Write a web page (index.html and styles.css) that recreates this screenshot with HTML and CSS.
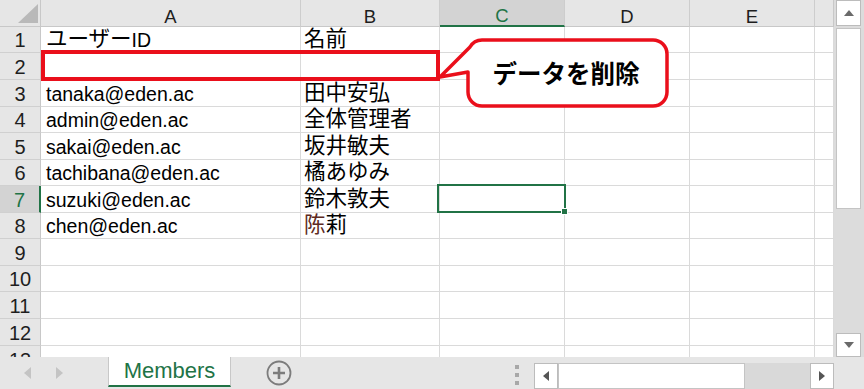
FILE: index.html
```html
<!DOCTYPE html>
<html lang="ja">
<head>
<meta charset="utf-8">
<title>Members</title>
<link rel="stylesheet" href="styles.css">
</head>
<body>
<div class="app">
  <div class="main">
    <div class="sheet">
      <div class="grid">
        <div class="corner"><div class="tri"></div></div>
        <div class="ch">A</div>
        <div class="ch">B</div>
        <div class="ch sel">C</div>
        <div class="ch">D</div>
        <div class="ch">E</div>
        <div class="ch last"></div>

        <div class="rh">1</div>
        <div class="c"><span class="jp">ユーザー</span>ID</div>
        <div class="c b"><span class="jp">名前</span></div>
        <div class="c"></div><div class="c"></div><div class="c"></div><div class="c"></div>

        <div class="rh">2</div>
        <div class="c"></div><div class="c b"></div>
        <div class="c"></div><div class="c"></div><div class="c"></div><div class="c"></div>

        <div class="rh">3</div>
        <div class="c">tanaka@eden.ac</div>
        <div class="c b"><span class="jp">田中安弘</span></div>
        <div class="c"></div><div class="c"></div><div class="c"></div><div class="c"></div>

        <div class="rh">4</div>
        <div class="c">admin@eden.ac</div>
        <div class="c b"><span class="jp">全体管理者</span></div>
        <div class="c"></div><div class="c"></div><div class="c"></div><div class="c"></div>

        <div class="rh">5</div>
        <div class="c">sakai@eden.ac</div>
        <div class="c b"><span class="jp">坂井敏夫</span></div>
        <div class="c"></div><div class="c"></div><div class="c"></div><div class="c"></div>

        <div class="rh">6</div>
        <div class="c">tachibana@eden.ac</div>
        <div class="c b"><span class="jp">橘あゆみ</span></div>
        <div class="c"></div><div class="c"></div><div class="c"></div><div class="c"></div>

        <div class="rh sel">7</div>
        <div class="c">suzuki@eden.ac</div>
        <div class="c b"><span class="jp">鈴木敦夫</span></div>
        <div class="c"></div><div class="c"></div><div class="c"></div><div class="c"></div>

        <div class="rh">8</div>
        <div class="c">chen@eden.ac</div>
        <div class="c b"><span class="jp"><span class="odd">陈</span>莉</span></div>
        <div class="c"></div><div class="c"></div><div class="c"></div><div class="c"></div>

        <div class="rh">9</div>
        <div class="c"></div><div class="c"></div><div class="c"></div><div class="c"></div><div class="c"></div><div class="c"></div>
        <div class="rh">10</div>
        <div class="c"></div><div class="c"></div><div class="c"></div><div class="c"></div><div class="c"></div><div class="c"></div>
        <div class="rh">11</div>
        <div class="c"></div><div class="c"></div><div class="c"></div><div class="c"></div><div class="c"></div><div class="c"></div>
        <div class="rh">12</div>
        <div class="c"></div><div class="c"></div><div class="c"></div><div class="c"></div><div class="c"></div><div class="c"></div>
        <div class="rh">13</div>
        <div class="c"></div><div class="c"></div><div class="c"></div><div class="c"></div><div class="c"></div><div class="c"></div>
      </div>

      <div class="redbox"></div>

      <div class="callout">
        <svg class="bubble" width="242" height="76" viewBox="0 0 242 76">
          <path d="M52 4 H223 A14 14 0 0 1 237 18 V56 A14 14 0 0 1 223 70 H52 A14 14 0 0 1 38 56 V36 L10 41 L40 11 A14 14 0 0 1 52 4 Z" fill="#fff" stroke="#ea0f1b" stroke-width="3.5" stroke-linejoin="round"/>
        </svg>
        <span class="ctext">データを削除</span>
      </div>

      <div class="selbox"><span class="handle"></span></div>
    </div>

    <div class="vscroll">
      <div class="vbtn"><svg width="10" height="6" viewBox="0 0 10 6"><polygon points="0,6 10,6 5,0" fill="#6a6a6a"/></svg></div>
      <div class="vthumb"></div>
      <div class="vtrack"></div>
      <div class="vbtn down"><svg width="10" height="6" viewBox="0 0 10 6"><polygon points="0,0 10,0 5,6" fill="#6a6a6a"/></svg></div>
    </div>
  </div>

  <div class="tabbar">
    <div class="nav">
      <svg width="7" height="12" viewBox="0 0 7 12"><polygon points="7,0 7,12 0,6" fill="#c4c4c4"/></svg>
      <svg width="7" height="12" viewBox="0 0 7 12"><polygon points="0,0 0,12 7,6" fill="#c4c4c4"/></svg>
    </div>
    <div class="tab">Members</div>
    <div class="add">
      <svg width="26" height="26" viewBox="0 0 26 26">
        <circle cx="13" cy="13" r="11.5" fill="none" stroke="#7c7c7c" stroke-width="1.8"/>
        <path d="M13 7 V19 M7 13 H19" stroke="#7c7c7c" stroke-width="2.6"/>
      </svg>
    </div>
    <div class="spacer"></div>
    <div class="dots"><i></i><i></i><i></i></div>
    <div class="hscroll">
      <div class="hbtn"><svg width="6" height="10" viewBox="0 0 6 10"><polygon points="6,0 6,10 0,5" fill="#555"/></svg></div>
      <div class="hthumb"></div>
      <div class="htrack"></div>
      <div class="hbtn"><svg width="6" height="10" viewBox="0 0 6 10"><polygon points="0,0 0,10 6,5" fill="#555"/></svg></div>
    </div>
  </div>
</div>
</body>
</html>
```

FILE: styles.css
```css
* { box-sizing: border-box; }
html, body { margin: 0; padding: 0; }
body {
  width: 864px;
  height: 389px;
  overflow: hidden;
  background: #fff;
  font-family: "Liberation Sans", "Noto Sans CJK JP", sans-serif;
}
.app { display: flex; flex-direction: column; width: 864px; height: 389px; }
.main { display: flex; height: 357px; }
.sheet { position: relative; width: 834px; height: 357px; overflow: hidden; }

.grid {
  display: grid;
  grid-template-columns: 41px 260px 139px 125px 125px 125px 19px;
  grid-template-rows: 27px 26px 27px 27px 26px 27px 26px 27px 26px 27px 26px 27px 27px 27px;
}
.corner {
  background: #e6e6e6;
  border-right: 1px solid #c8c8c8;
  border-bottom: 1px solid #c8c8c8;
  display: flex;
  justify-content: flex-end;
  align-items: flex-end;
  padding: 0 2px 3px 0;
}
.tri {
  width: 0;
  height: 0;
  border-left: 20px solid transparent;
  border-bottom: 19px solid #b9b9b9;
}
.ch {
  background: #e6e6e6;
  border-right: 1px solid #cdcdcd;
  border-bottom: 1px solid #c8c8c8;
  display: flex;
  justify-content: center;
  align-items: flex-end;
  font-size: 18.5px;
  line-height: 19px;
  color: #1e1e1e;
}
.ch.sel {
  background: #d3d3d3;
  border-bottom: 2px solid #217346;
  color: #217346;
  line-height: 18px;
}
.ch.last { border-right: 1px solid #c8c8c8; }
.rh {
  background: #e6e6e6;
  border-right: 1px solid #c8c8c8;
  border-bottom: 1px solid #d0d0d0;
  display: flex;
  justify-content: center;
  align-items: flex-end;
  padding-bottom: 1px;
  font-size: 20px;
  line-height: 22px;
  color: #1e1e1e;
}
.rh.sel {
  background: #d3d3d3;
  border-right: 2px solid #217346;
  color: #217346;
}
.c {
  border-right: 1px solid #dadada;
  border-bottom: 1px solid #dadada;
  display: flex;
  align-items: flex-end;
  padding: 0 0 1px 5px;
  font-size: 19.5px;
  line-height: 22px;
  white-space: nowrap;
  color: #000;
}
.c.b { padding-left: 3px; }
.jp {
  font-family: "Noto Sans CJK JP", sans-serif;
  font-size: 21.5px;
  margin-bottom: 3px;
}
.odd { color: #5e2a22; }

.redbox {
  position: absolute;
  left: 41px;
  top: 50px;
  width: 399px;
  height: 31px;
  border: 4px solid #ea0f1b;
}
.callout {
  position: absolute;
  left: 468px;
  top: 40px;
  width: 199px;
  height: 66px;
  display: flex;
  align-items: center;
  justify-content: center;
}
.bubble { position: absolute; left: -38px; top: -4px; }
.ctext {
  position: relative;
  font-family: "Noto Sans CJK JP", sans-serif;
  font-weight: 700;
  font-size: 24.5px;
  line-height: 30px;
  color: #000;
  margin-left: -3px;
}
.selbox {
  position: absolute;
  left: 437px;
  top: 184px;
  width: 129px;
  height: 29px;
  border: 2px solid #217346;
}
.handle {
  position: absolute;
  right: -4px;
  bottom: -4px;
  width: 7px;
  height: 7px;
  background: #217346;
  border: 1px solid #fff;
}

.vscroll {
  width: 30px;
  background: #dcdcdc;
  display: flex;
  flex-direction: column;
  gap: 2px;
  padding: 0 3px 0 2px;
}
.vbtn {
  height: 26px;
  background: #fff;
  border: 1px solid #bcbcbc;
  display: flex;
  align-items: center;
  justify-content: center;
}
.vbtn.down { height: 24px; }
.vthumb {
  height: 181px;
  background: #fff;
  border: 1px solid #c4c4c4;
}
.vtrack { flex: 1; }

.tabbar {
  height: 32px;
  background: #e6e6e6;
  display: flex;
  align-items: stretch;
}
.nav {
  width: 108px;
  display: flex;
  align-items: center;
  padding-left: 24px;
  gap: 25px;
}
.tab {
  width: 123px;
  height: 30px;
  background: #fff;
  border-left: 1px solid #c8c8c8;
  border-right: 1px solid #c8c8c8;
  border-bottom: 2px solid #217346;
  color: #217346;
  font-size: 22px;
  line-height: 22px;
  padding-top: 3px;
  text-align: center;
}
.add {
  width: 96px;
  display: flex;
  align-items: center;
  justify-content: center;
}
.spacer { flex: 1; }
.dots {
  width: 4px;
  margin-right: 15px;
  display: flex;
  flex-direction: column;
  justify-content: center;
  gap: 4px;
  padding-top: 4px;
}
.dots i { display: block; width: 4px; height: 4px; background: #a8a8a8; }
.hscroll {
  width: 300px;
  height: 26px;
  align-self: flex-end;
  margin-right: 30px;
  display: flex;
  background: #d9d9d9;
}
.hbtn {
  width: 24px;
  background: #fff;
  border: 1px solid #bcbcbc;
  display: flex;
  align-items: center;
  justify-content: center;
}
.hthumb {
  width: 187px;
  background: #fff;
  border: 1px solid #c4c4c4;
}
.htrack { flex: 1; }
```
